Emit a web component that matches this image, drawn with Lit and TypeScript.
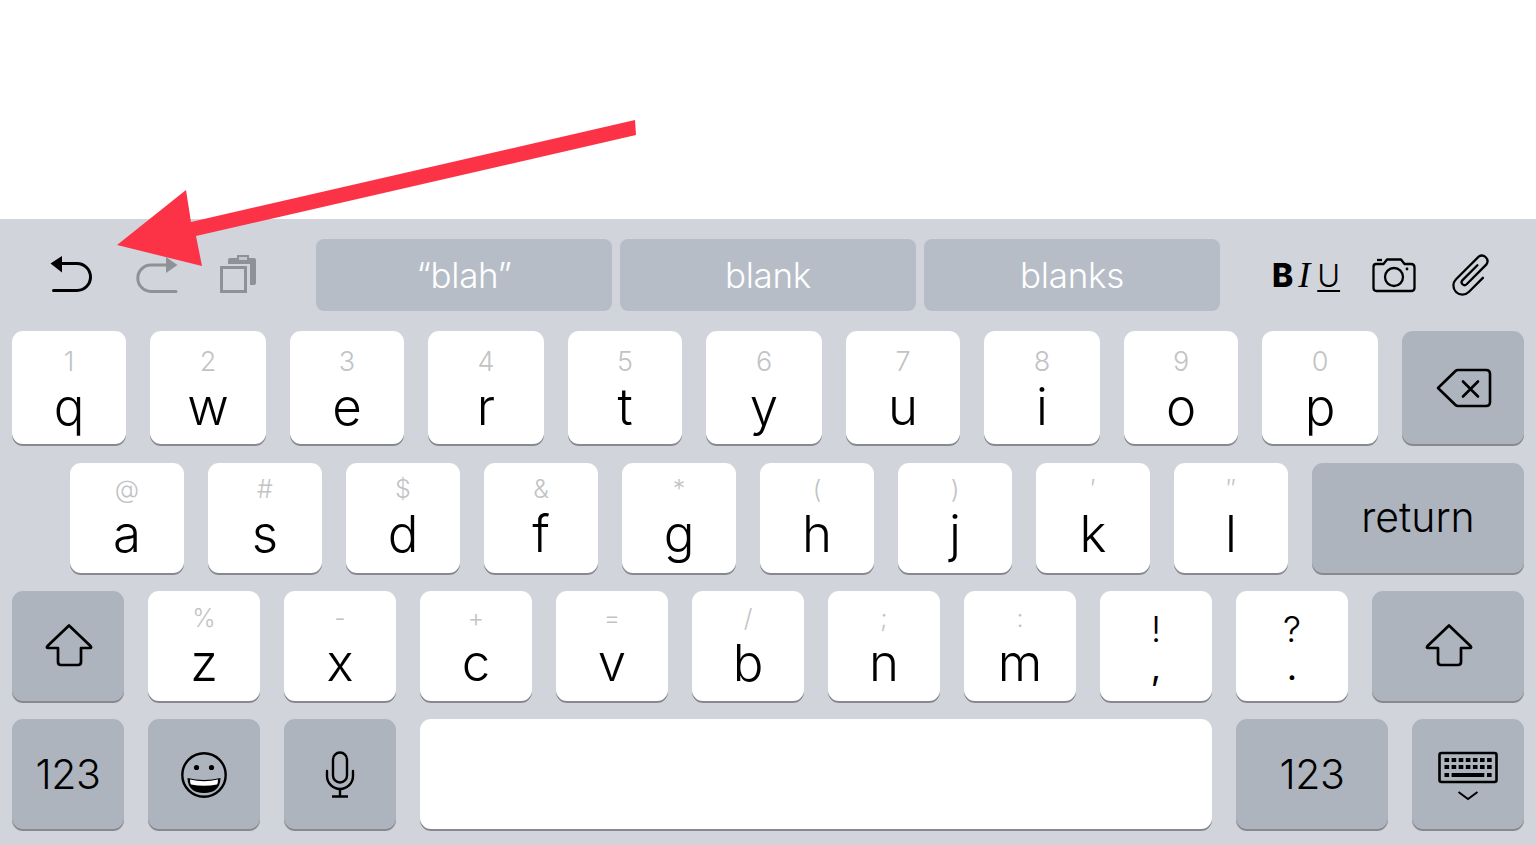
import { LitElement, html, css, svg } from "lit";
import { customElement } from "lit/decorators.js";

type K = { m?: string; s?: string; w: number; d?: boolean; c?: string; icon?: string };

const L = (m: string, s: string, w: number): K => ({ m, s, w });

const row1: K[] = [
  L("q", "1", 114), L("w", "2", 116), L("e", "3", 114), L("r", "4", 116), L("t", "5", 114),
  L("y", "6", 116), L("u", "7", 114), L("i", "8", 116), L("o", "9", 114), L("p", "0", 116),
  { w: 122, d: true, icon: "back" },
];
const row2: K[] = [
  L("a", "@", 114), L("s", "#", 114), L("d", "$", 114), L("f", "&", 114), L("g", "*", 114),
  L("h", "(", 114), L("j", ")", 114), L("k", "′", 114), L("l", "″", 114),
  { w: 212, d: true, m: "return", c: "ret" },
];
const row3: K[] = [
  { w: 112, d: true, icon: "shift" },
  L("z", "%", 112), L("x", "-", 112), L("c", "+", 112), L("v", "=", 112), L("b", "/", 112),
  L("n", ";", 112), L("m", ":", 112),
  { w: 112, c: "punct", m: ",", s: "!" }, { w: 112, c: "punct", m: ".", s: "?" },
  { w: 152, d: true, icon: "shift" },
];
const row4: K[] = [
  { w: 112, d: true, m: "123", c: "num" },
  { w: 112, d: true, icon: "emoji" },
  { w: 112, d: true, icon: "mic" },
  { w: 792 },
  { w: 152, d: true, m: "123", c: "num" },
  { w: 112, d: true, icon: "kbd" },
];

const icons: Record<string, unknown> = {
  back: html`<svg class="ic" width="60" height="44" viewBox="0 0 60 44" fill="none" stroke="#000" stroke-width="2.6" stroke-linejoin="round" stroke-linecap="round">
    <path d="M5 22 L22.5 5 Q23.5 4 25 4 H53 Q57 4 57 8 V36 Q57 40 53 40 H25 Q23.5 40 22.5 39 Z"/>
    <path d="M30 15.5 L45 30.5 M45 15.5 L30 30.5"/></svg>`,
  shift: html`<svg class="ic" width="50" height="46" viewBox="0 0 50 46" fill="none" stroke="#000" stroke-width="2.7" stroke-linejoin="round">
    <path d="M26 2.5 L4.5 23 Q3 25 5 25 H15 V39 Q15 42 18 42 H35 Q38 42 38 39 V25 H47 Q49 25 47.5 23 Z"/></svg>`,
  emoji: html`<svg class="ic low" width="48" height="48" viewBox="0 0 48 48">
    <circle cx="24" cy="24" r="21.7" fill="none" stroke="#000" stroke-width="2.4"/>
    <circle cx="16.5" cy="16.5" r="2.6"/><circle cx="31.5" cy="16.5" r="2.6"/>
    <path d="M7.5 27 Q24 31 40.5 27 Q40 42 24 42 Q8 42 7.5 27 Z"/>
    <path d="M10 28.5 Q24 32 38 28.5 Q38 32 37 33.5 Q24 36 11 33.5 Q10 32 10 28.5 Z" fill="#fff"/></svg>`,
  mic: html`<svg class="ic low" width="30" height="48" viewBox="0 0 30 48" fill="none" stroke="#000" stroke-width="2.4" stroke-linecap="round">
    <rect x="8" y="1.5" width="14" height="30" rx="7"/>
    <path d="M2 20 V25 A13 13 0 0 0 28 25 V20"/>
    <path d="M15 38 V45 M7 45.5 H23" stroke-linecap="butt"/></svg>`,
  kbd: html`<svg class="ic lower" width="62" height="50" viewBox="0 0 62 50">
    <rect x="2.5" y="2" width="57" height="29" rx="2" fill="none" stroke="#000" stroke-width="2.6"/>
    ${[0, 1, 2, 3, 4, 5, 6].flatMap((i) => [
      svg`<rect x="${7.5 + i * 7.1}" y="7" width="4.6" height="4"/>`,
      svg`<rect x="${7.5 + i * 7.1}" y="14" width="4.6" height="4"/>`,
    ])}
    <rect x="7.5" y="22" width="4.6" height="4"/><rect x="14.6" y="22" width="32.7" height="4"/><rect x="50" y="22" width="4.6" height="4"/>
    <path d="M21.5 41 L31 48 L40.5 41" fill="none" stroke="#000" stroke-width="2"/></svg>`,
};

@customElement("app-root")
export class AppRoot extends LitElement {
  static styles = css`
    :host { display: flex; flex-direction: column; position: relative; height: 845px; overflow: hidden; background: #fff;
      font-family: Inter, "Liberation Sans", sans-serif; font-weight: 300; color: #000; }
    .top { height: 219px; flex: none; }
    .board { flex: 1; background: #d1d5db; padding: 0 12px; display: flex; flex-direction: column; }
    .bar { display: flex; align-items: center; height: 112px; margin: 0 -12px; flex: none; }
    .left { width: 316px; flex: none; display: flex; align-items: center; gap: 40px; padding-left: 50px; box-sizing: border-box; }
    .chips { display: flex; gap: 8px; flex: none; width: 904px; }
    .chip { width: 296px; height: 72px; border-radius: 8px; background: #b6bdc7; color: #fff; font-size: 35px;
      display: flex; align-items: center; justify-content: center; letter-spacing: -0.3px; }
    .right { flex: 1; display: flex; align-items: center; padding-left: 52px; }
    .biu { width: 100px; display: flex; align-items: baseline; color: #000; line-height: 44px; height: 44px; }
    .b { font-weight: 800; font-size: 32px; }
    .i { font-family: "Liberation Serif", serif; font-style: italic; font-size: 36px; font-weight: 400; margin-left: 5px; width: 19px; }
    .u { font-size: 31px; text-decoration: underline; text-decoration-thickness: 2px; text-underline-offset: 3px; }
    .clip { margin-left: 35px; }
    svg { display: block; flex: none; }
    .row { display: flex; gap: 24px; flex: none; }
    .r1 { height: 113px; margin-bottom: 19px; }
    .r2, .r3 { height: 110px; margin-bottom: 18px; }
    .r4 { height: 110px; }
    .r2 { padding-left: 58px; }
    .key { box-sizing: border-box; flex: none; height: 100%; background: #fff; border-radius: 11px; box-shadow: 0 2px 0 #87898e;
      display: flex; flex-direction: column; align-items: center; justify-content: flex-start; }
    .dark { background: #adb4be; justify-content: center; }
    .low { margin-top: 2px; }
    .lower { margin-top: 4px; }
    .sub { height: 36px; margin-top: 12px; line-height: 36px; font-size: 27px; color: #c2c3c5; }
    .main { height: 62px; line-height: 62px; font-size: 51px; margin-top: -4px; }
    .r1 .sub { margin-top: 13px; }
    .r2 .sub, .r3 .sub { margin-top: 9px; font-size: 25px; }
    .r2 .sub { margin-top: 8px; }
    span.ret, span.num { font-size: 41px; line-height: 48px; height: 48px; margin-top: 0; }
    span.num { letter-spacing: -0.3px; }
    span.ret { margin-top: -2px; }
    .key.punct .sub { color: #000; font-size: 36px; margin-top: 20px; line-height: 36px; height: 36px; }
    .key.punct .main { font-size: 36px; line-height: 40px; height: 40px; font-weight: 400; margin-top: 0; }
    .arrow { position: absolute; left: 0; top: 0; pointer-events: none; }
  `;

  key(k: K) {
    const cls = `key ${k.d ? "dark" : ""} ${k.c === "punct" ? "punct" : ""}`;
    return html`<div class=${cls} style="width:${k.w}px">
      ${k.icon ? icons[k.icon] : ""}
      ${k.s ? html`<span class="sub">${k.s}</span>` : ""}
      ${k.m ? html`<span class="main ${k.c ?? ""}">${k.m}</span>` : ""}
    </div>`;
  }

  render() {
    return html`
      <div class="top"></div>
      <div class="board">
        <div class="bar">
          <div class="left">
            <svg width="44" height="44" viewBox="0 0 44 44" fill="none" stroke="#000" stroke-width="3" stroke-linecap="round">
              <path d="M0.5 10.5 L12 3 V19.5 Z" fill="#000" stroke="none"/>
              <path d="M11 10.5 H27 a13.5 13.5 0 0 1 0 27 H3.5"/>
            </svg>
            <svg width="44" height="44" viewBox="0 0 44 44" fill="none" stroke="#8e9196" stroke-width="3" stroke-linecap="round">
              <path d="M43.5 12 L32 4 V20 Z" fill="#8e9196" stroke="none"/>
              <path d="M33 12 H17 a13.2 13.2 0 0 0 0 26.4 H42"/>
            </svg>
            <svg width="44" height="44" viewBox="0 0 44 44">
              <path d="M10 11 V7 Q10 5 12 5 H36 Q38 5 38 7 V30 Q38 32 36 32 H32 V11 Z" fill="#8e9196"/>
              <rect x="20" y="3" width="10" height="5" fill="#c4c7cd" stroke="#8e9196" stroke-width="2"/>
              <rect x="3.5" y="14.5" width="24" height="24" fill="none" stroke="#8e9196" stroke-width="3"/>
            </svg>
          </div>
          <div class="chips">
            <div class="chip">“blah”</div><div class="chip">blank</div><div class="chip">blanks</div>
          </div>
          <div class="right">
            <div class="biu"><span class="b">B</span><span class="i">I</span><span class="u">U</span></div>
            <svg width="44" height="44" viewBox="0 0 44 44" fill="none" stroke="#000" stroke-width="2.3" stroke-linejoin="round">
              <path d="M4 11 H11.5 L15 6.5 H29 L32.5 11 H39 Q42.5 11 42.5 14.5 V35 Q42.5 38 39 38 H4.5 Q1.5 38 1.5 35 V14 Q1.5 11 4 11 Z"/>
              <circle cx="22" cy="24" r="9"/>
              <circle cx="35" cy="16" r="1.4" fill="#000" stroke="none"/>
              <path d="M5 7 H10"/>
            </svg>
            <svg class="clip" width="44" height="44" viewBox="-22 -22 44 44" fill="none" stroke="#000" stroke-width="2.3" stroke-linecap="round">
              <path transform="rotate(45)" d="M9 -5 V15 A9 9 0 0 1 -9 15 V-17 A5.6 5.6 0 0 1 2 -17 V11 A2.9 2.9 0 0 1 -3.8 11 V-10"/>
            </svg>
          </div>
        </div>
        <div class="row r1">${row1.map((k) => this.key(k))}</div>
        <div class="row r2">${row2.map((k) => this.key(k))}</div>
        <div class="row r3">${row3.map((k) => this.key(k))}</div>
        <div class="row r4">${row4.map((k) => this.key(k))}</div>
      </div>
      <svg class="arrow" width="1536" height="845" viewBox="0 0 1536 845">
        <path d="M635 120 L636 135 L196 236 L202 266 L117 245 L186 190 L191 222 Z" fill="#fc3347"/>
      </svg>
    `;
  }
}
